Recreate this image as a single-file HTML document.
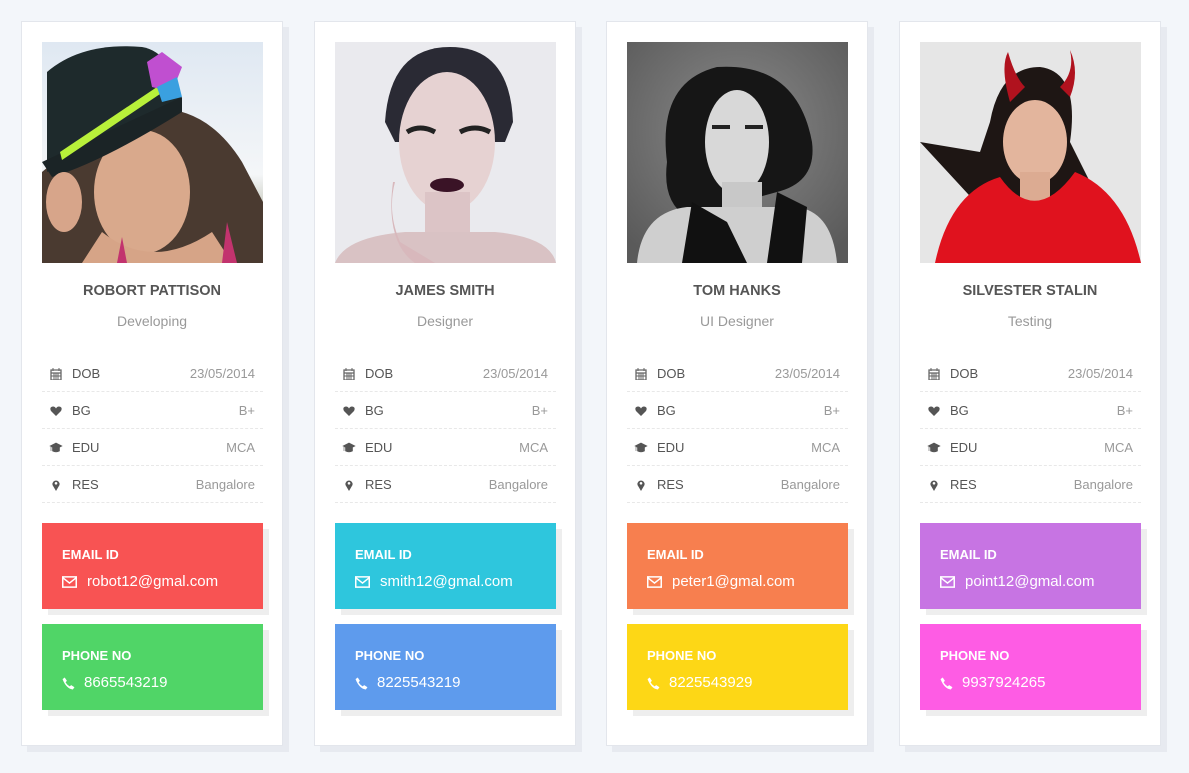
<!DOCTYPE html>
<html><head><meta charset="utf-8"><style>
*{box-sizing:border-box;margin:0;padding:0}
body{width:1189px;height:773px;background:#f3f6fa;font-family:"Liberation Sans",sans-serif;position:relative;overflow:hidden}
.card{position:absolute;top:21px;width:262px;height:725px;background:#fff;border:1px solid #e3e6ec;box-shadow:6px 6px 0 #e7eaf0}
.ph{position:absolute;left:20px;top:20px;width:221px;height:221px;overflow:hidden}
.ph svg{display:block}
.name{position:absolute;top:261px;left:0;width:100%;text-align:center;font-size:14.5px;font-weight:bold;color:#555}
.role{position:absolute;top:291px;left:0;width:100%;text-align:center;font-size:14px;color:#999}
.rows{position:absolute;left:20px;top:333px;width:221px}
.row{height:37px;border-bottom:1px dashed #e8e8e8;position:relative;font-size:13px;color:#555}
.row .ic{position:absolute;left:8px;top:13px;width:12px;height:12px}
.row .l{position:absolute;left:30px;top:11px}
.row .v{position:absolute;right:8px;top:11px;color:#999}
.box{position:absolute;left:20px;width:221px;height:86px;color:#fff;box-shadow:6px 6px 0 #eeeeee}
.box .t{position:absolute;left:20px;top:24px;font-size:13px;font-weight:bold}
.box .d{position:absolute;left:45px;top:50px;font-size:15px}
.box .d.p{left:42px}
.box svg{position:absolute;left:20px;top:53px}
</style></head><body>

<div class="card" style="left:21px">
 <div class="ph"><svg width="221" height="221"><defs><linearGradient id="s1" x1="0" y1="0" x2="0" y2="1"><stop offset="0" stop-color="#dfe8f2"/><stop offset=".6" stop-color="#f4f6f8"/><stop offset="1" stop-color="#8a8b6a"/></linearGradient></defs>
 <rect width="221" height="221" fill="url(#s1)"/>
 <path d="M60 80 Q150 40 200 120 L221 160 L221 221 L0 221 L0 130Z" fill="#4a3a30"/>
 <ellipse cx="100" cy="150" rx="48" ry="62" fill="#d9a98c"/>
 <path d="M60 190 Q110 230 170 190 L190 221 L40 221Z" fill="#d6a487"/>
 <path d="M75 221 L80 195 L85 221Z M180 221 L185 180 L195 221Z" fill="#c2336e"/>
 <path d="M5 30 Q40 0 100 5 Q130 10 140 60 L5 130Z" fill="#1e2a2c"/>
 <path d="M0 120 L140 55 L140 70 Q60 120 10 135Z" fill="#1b2426"/>
 <path d="M18 110 L115 45 L118 52 L20 118Z" fill="#b8f03a"/>
 <path d="M105 20 L120 10 L140 25 L130 50 L110 45Z" fill="#c04fd0"/>
 <path d="M115 45 L135 35 L140 55 L120 60Z" fill="#3aa0e0"/>
 <ellipse cx="22" cy="160" rx="18" ry="30" fill="#d7a58a"/>
 </svg></div>
 <div class="name">ROBORT PATTISON</div><div class="role">Developing</div>
 <div class="rows">
  <div class="row"><svg class="ic" viewBox="0 0 12 12"><path d="M1 2h10v10H1z M1 5h10" fill="none" stroke="#666" stroke-width="1.3"/><path d="M3 0v3M9 0v3M4 5v7M6 5v7M8 5v7M1 8h10" stroke="#666" stroke-width="1"/></svg><span class="l">DOB</span><span class="v">23/05/2014</span></div>
  <div class="row"><svg class="ic" viewBox="0 0 12 12"><path d="M6 11L1 6Q-1 2 3 1.5Q5 1.5 6 3.5Q7 1.5 9 1.5Q13 2 11 6Z" fill="#555"/></svg><span class="l">BG</span><span class="v">B+</span></div>
  <div class="row"><svg class="ic" viewBox="0 0 12 12" style="width:14px;left:7px"><path d="M0 4L6 1L12 4L6 7Z M2.5 5.5V9Q6 11 9.5 9V5.5L6 7.5Z M1 5V9" fill="#555" stroke="#555" stroke-width=".6"/></svg><span class="l">EDU</span><span class="v">MCA</span></div>
  <div class="row"><svg class="ic" viewBox="0 0 12 12"><path d="M6 12L2.5 6A3.6 3.6 0 1 1 9.5 6Z" fill="#555"/><circle cx="6" cy="4.3" r="1.3" fill="#fff"/></svg><span class="l">RES</span><span class="v">Bangalore</span></div>
 </div>
 <div class="box" style="top:501px;background:#f85353"><div class="t">EMAIL ID</div><svg width="15" height="12" viewBox="0 0 14 11"><path d="M.7.7h12.6v9.6H.7z M.7 1.5L7 6.5L13.3 1.5" fill="none" stroke="#fff" stroke-width="1.4"/></svg><div class="d">robot12@gmal.com</div></div>
 <div class="box" style="top:602px;background:#50d567"><div class="t">PHONE NO</div><svg width="13" height="13" viewBox="0 0 12 12"><path d="M2.5 0.5L4.5 3.5L3.3 5Q4.8 7.5 7 8.7L8.5 7.5L11.5 9.5L10 11.5Q4 11 0.5 2Z" fill="#fff"/></svg><div class="d p">8665543219</div></div>
</div>

<div class="card" style="left:314px">
 <div class="ph"><svg width="221" height="221"><rect width="221" height="221" fill="#eaeaee"/>
 <path d="M50 80 Q55 5 115 5 Q175 5 178 80 L170 100 L60 100Z" fill="#2a2a34"/>
 <ellipse cx="112" cy="100" rx="48" ry="70" fill="#e6d2d2"/>
 <rect x="90" y="150" width="45" height="50" fill="#dcc4c6"/>
 <path d="M0 221 Q10 195 70 190 L160 190 Q215 195 221 221Z" fill="#d9c2c4"/>
 <path d="M72 90 Q85 82 100 90 M125 90 Q140 82 155 90" stroke="#222" stroke-width="5" fill="none"/>
 <ellipse cx="112" cy="143" rx="17" ry="7" fill="#3a1326"/>
 <path d="M60 140 Q52 170 65 200 L100 221 L80 221 Q50 200 58 140Z" fill="#d8b8bc"/>
 </svg></div>
 <div class="name">JAMES SMITH</div><div class="role">Designer</div>
 <div class="rows">
  <div class="row"><svg class="ic" viewBox="0 0 12 12"><path d="M1 2h10v10H1z M1 5h10" fill="none" stroke="#666" stroke-width="1.3"/><path d="M3 0v3M9 0v3M4 5v7M6 5v7M8 5v7M1 8h10" stroke="#666" stroke-width="1"/></svg><span class="l">DOB</span><span class="v">23/05/2014</span></div>
  <div class="row"><svg class="ic" viewBox="0 0 12 12"><path d="M6 11L1 6Q-1 2 3 1.5Q5 1.5 6 3.5Q7 1.5 9 1.5Q13 2 11 6Z" fill="#555"/></svg><span class="l">BG</span><span class="v">B+</span></div>
  <div class="row"><svg class="ic" viewBox="0 0 12 12" style="width:14px;left:7px"><path d="M0 4L6 1L12 4L6 7Z M2.5 5.5V9Q6 11 9.5 9V5.5L6 7.5Z M1 5V9" fill="#555" stroke="#555" stroke-width=".6"/></svg><span class="l">EDU</span><span class="v">MCA</span></div>
  <div class="row"><svg class="ic" viewBox="0 0 12 12"><path d="M6 12L2.5 6A3.6 3.6 0 1 1 9.5 6Z" fill="#555"/><circle cx="6" cy="4.3" r="1.3" fill="#fff"/></svg><span class="l">RES</span><span class="v">Bangalore</span></div>
 </div>
 <div class="box" style="top:501px;background:#2ec6dd"><div class="t">EMAIL ID</div><svg width="15" height="12" viewBox="0 0 14 11"><path d="M.7.7h12.6v9.6H.7z M.7 1.5L7 6.5L13.3 1.5" fill="none" stroke="#fff" stroke-width="1.4"/></svg><div class="d">smith12@gmal.com</div></div>
 <div class="box" style="top:602px;background:#5e9bed"><div class="t">PHONE NO</div><svg width="13" height="13" viewBox="0 0 12 12"><path d="M2.5 0.5L4.5 3.5L3.3 5Q4.8 7.5 7 8.7L8.5 7.5L11.5 9.5L10 11.5Q4 11 0.5 2Z" fill="#fff"/></svg><div class="d p">8225543219</div></div>
</div>

<div class="card" style="left:606px">
 <div class="ph"><svg width="221" height="221"><defs><radialGradient id="g3" cx=".5" cy=".4" r=".7"><stop offset="0" stop-color="#8a8a8a"/><stop offset="1" stop-color="#5a5a5a"/></radialGradient></defs><rect width="221" height="221" fill="url(#g3)"/>
 <path d="M40 120 Q30 40 90 25 Q170 20 185 100 Q190 140 150 150 L60 175 Q35 160 40 120Z" fill="#161616"/>
 <ellipse cx="110" cy="100" rx="32" ry="52" fill="#d8d8d8"/>
 <rect x="95" y="140" width="40" height="40" fill="#c8c8c8"/>
 <path d="M10 221 Q15 170 60 165 L170 165 Q205 170 210 221Z" fill="#cfcfcf"/>
 <path d="M55 221 L65 160 L100 180 L120 221Z M140 221 L150 150 L180 165 L175 221Z" fill="#111"/>
 <path d="M85 85h18M118 85h18" stroke="#222" stroke-width="4"/>
 </svg></div>
 <div class="name">TOM HANKS</div><div class="role">UI Designer</div>
 <div class="rows">
  <div class="row"><svg class="ic" viewBox="0 0 12 12"><path d="M1 2h10v10H1z M1 5h10" fill="none" stroke="#666" stroke-width="1.3"/><path d="M3 0v3M9 0v3M4 5v7M6 5v7M8 5v7M1 8h10" stroke="#666" stroke-width="1"/></svg><span class="l">DOB</span><span class="v">23/05/2014</span></div>
  <div class="row"><svg class="ic" viewBox="0 0 12 12"><path d="M6 11L1 6Q-1 2 3 1.5Q5 1.5 6 3.5Q7 1.5 9 1.5Q13 2 11 6Z" fill="#555"/></svg><span class="l">BG</span><span class="v">B+</span></div>
  <div class="row"><svg class="ic" viewBox="0 0 12 12" style="width:14px;left:7px"><path d="M0 4L6 1L12 4L6 7Z M2.5 5.5V9Q6 11 9.5 9V5.5L6 7.5Z M1 5V9" fill="#555" stroke="#555" stroke-width=".6"/></svg><span class="l">EDU</span><span class="v">MCA</span></div>
  <div class="row"><svg class="ic" viewBox="0 0 12 12"><path d="M6 12L2.5 6A3.6 3.6 0 1 1 9.5 6Z" fill="#555"/><circle cx="6" cy="4.3" r="1.3" fill="#fff"/></svg><span class="l">RES</span><span class="v">Bangalore</span></div>
 </div>
 <div class="box" style="top:501px;background:#f77f4f"><div class="t">EMAIL ID</div><svg width="15" height="12" viewBox="0 0 14 11"><path d="M.7.7h12.6v9.6H.7z M.7 1.5L7 6.5L13.3 1.5" fill="none" stroke="#fff" stroke-width="1.4"/></svg><div class="d">peter1@gmal.com</div></div>
 <div class="box" style="top:602px;background:#fdd716"><div class="t">PHONE NO</div><svg width="13" height="13" viewBox="0 0 12 12"><path d="M2.5 0.5L4.5 3.5L3.3 5Q4.8 7.5 7 8.7L8.5 7.5L11.5 9.5L10 11.5Q4 11 0.5 2Z" fill="#fff"/></svg><div class="d p">8225543929</div></div>
</div>

<div class="card" style="left:899px">
 <div class="ph"><svg width="221" height="221"><rect width="221" height="221" fill="#e6e6e6"/>
 <path d="M70 80 Q80 25 120 25 Q160 30 150 100 L170 140 L120 170 L60 165 L0 100 L60 110Z" fill="#1e1614"/>
 <ellipse cx="115" cy="100" rx="32" ry="42" fill="#e3b59d"/>
 <rect x="100" y="130" width="30" height="30" fill="#dcab92"/>
 <path d="M90 60 Q80 25 88 10 Q95 35 105 45Z M140 45 Q155 30 150 8 Q160 30 150 55Z" fill="#b0121e"/>
 <path d="M15 221 Q30 150 80 135 Q115 185 155 130 Q205 150 221 221Z" fill="#e0121e"/>
 </svg></div>
 <div class="name">SILVESTER STALIN</div><div class="role">Testing</div>
 <div class="rows">
  <div class="row"><svg class="ic" viewBox="0 0 12 12"><path d="M1 2h10v10H1z M1 5h10" fill="none" stroke="#666" stroke-width="1.3"/><path d="M3 0v3M9 0v3M4 5v7M6 5v7M8 5v7M1 8h10" stroke="#666" stroke-width="1"/></svg><span class="l">DOB</span><span class="v">23/05/2014</span></div>
  <div class="row"><svg class="ic" viewBox="0 0 12 12"><path d="M6 11L1 6Q-1 2 3 1.5Q5 1.5 6 3.5Q7 1.5 9 1.5Q13 2 11 6Z" fill="#555"/></svg><span class="l">BG</span><span class="v">B+</span></div>
  <div class="row"><svg class="ic" viewBox="0 0 12 12" style="width:14px;left:7px"><path d="M0 4L6 1L12 4L6 7Z M2.5 5.5V9Q6 11 9.5 9V5.5L6 7.5Z M1 5V9" fill="#555" stroke="#555" stroke-width=".6"/></svg><span class="l">EDU</span><span class="v">MCA</span></div>
  <div class="row"><svg class="ic" viewBox="0 0 12 12"><path d="M6 12L2.5 6A3.6 3.6 0 1 1 9.5 6Z" fill="#555"/><circle cx="6" cy="4.3" r="1.3" fill="#fff"/></svg><span class="l">RES</span><span class="v">Bangalore</span></div>
 </div>
 <div class="box" style="top:501px;background:#c774e3"><div class="t">EMAIL ID</div><svg width="15" height="12" viewBox="0 0 14 11"><path d="M.7.7h12.6v9.6H.7z M.7 1.5L7 6.5L13.3 1.5" fill="none" stroke="#fff" stroke-width="1.4"/></svg><div class="d">point12@gmal.com</div></div>
 <div class="box" style="top:602px;background:#fe5ce4"><div class="t">PHONE NO</div><svg width="13" height="13" viewBox="0 0 12 12"><path d="M2.5 0.5L4.5 3.5L3.3 5Q4.8 7.5 7 8.7L8.5 7.5L11.5 9.5L10 11.5Q4 11 0.5 2Z" fill="#fff"/></svg><div class="d p">9937924265</div></div>
</div>

</body></html>
